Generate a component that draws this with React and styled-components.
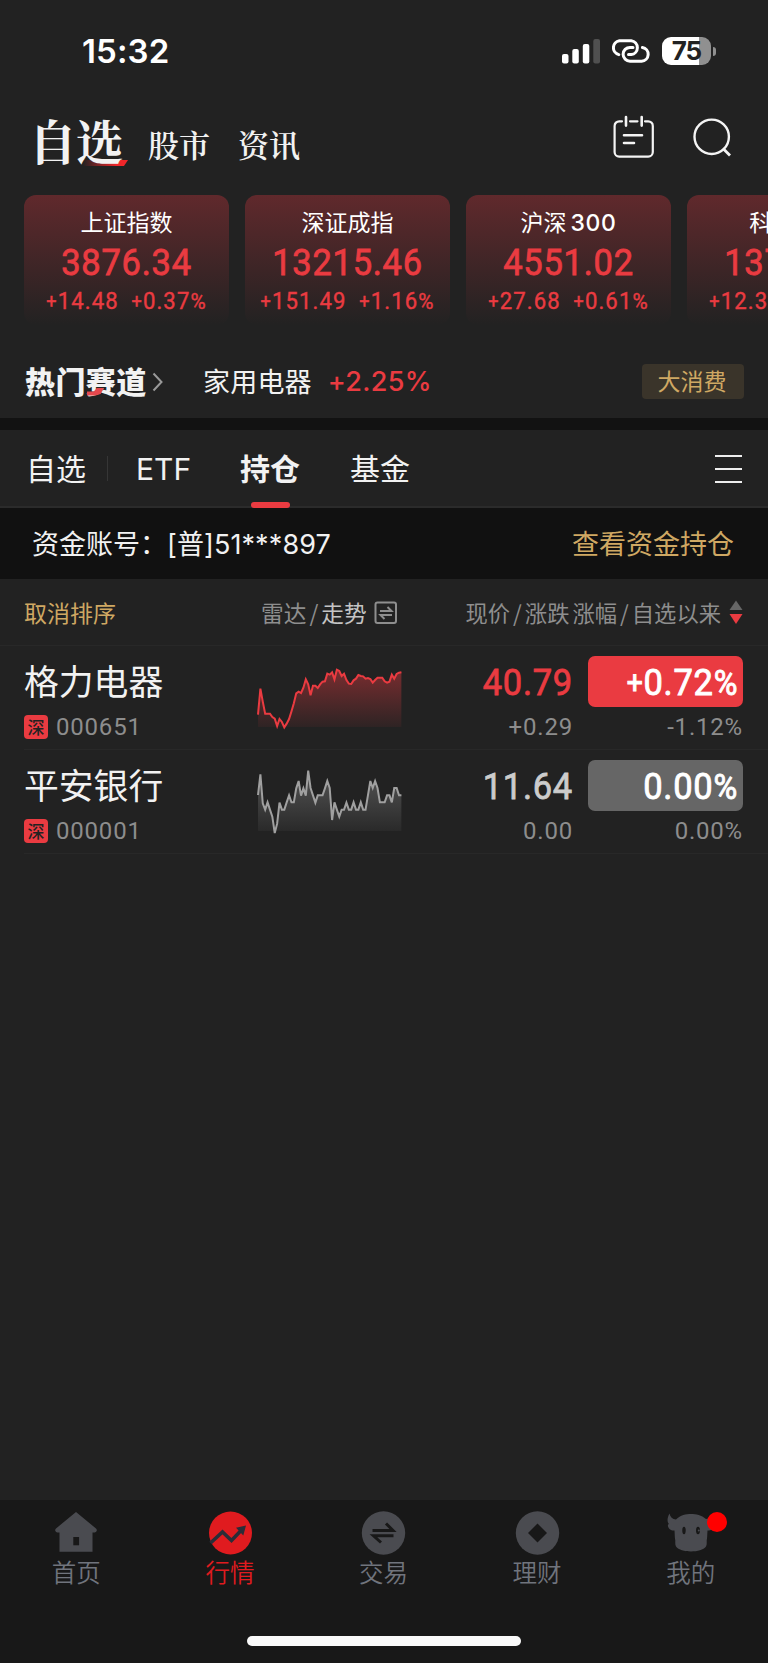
import styled, { createGlobalStyle } from 'styled-components';

const cjk = '"Noto Sans CJK SC", sans-serif';
const digits = 'Roboto, "Noto Sans CJK SC", sans-serif';
const latin = 'Inter, "Noto Sans CJK SC", sans-serif';
const serif = '"Noto Serif CJK SC", "Noto Serif SC", "Source Han Serif SC", "Noto Sans CJK SC", serif';

const RED = '#ea3b41';
const GOLD = '#cfa863';

const GlobalStyle = createGlobalStyle`
  * {
    box-sizing: border-box;
  }
  body {
    margin: 0;
    background: #222;
  }
`;

const Screen = styled.div`
  display: flex;
  flex-direction: column;
  width: 768px;
  height: 1663px;
  overflow: hidden;
  background: #222;
  color: #f2f2f2;
  font-family: ${cjk};
  white-space: nowrap;
`;

const StatusBar = styled.div`
  display: flex;
  align-items: center;
  height: 102px;
  padding: 0 52px 0 82px;
`;

const Clock = styled.div`
  flex: 1;
  color: #fff;
  font: 600 33px/40px ${latin};
  letter-spacing: 0.1px;
`;

const StatusIcons = styled.div`
  display: flex;
  align-items: center;
  gap: 12px;
`;

const Battery = styled.div`
  display: flex;
  align-items: center;
  gap: 2px;
`;

const BatteryBody = styled.div`
  width: 49px;
  height: 28px;
  border-radius: 9px;
  background: linear-gradient(90deg, #fff 37px, #909090 37px);
  color: #222;
  text-align: center;
  font: 700 26px/28px ${latin};
  letter-spacing: -0.9px;
`;

const BatteryNub = styled.div`
  width: 3px;
  height: 9px;
  border-radius: 0 4px 4px 0;
  background: #909090;
`;

const Header = styled.header`
  display: flex;
  height: 93px;
  padding: 0 36px 0 29px;
`;

const MainTitle = styled.div`
  position: relative;
  width: 119px;
  padding-top: 10px;
  font: 700 47.5px/56px ${serif};
  letter-spacing: -0.8px;
  span {
    position: relative;
  }
`;

const TitleMark = styled.i`
  position: absolute;
  left: 54px;
  top: 58px;
  width: 45px;
  height: 6px;
  background: linear-gradient(90deg, transparent, #f0262a 75%);
  clip-path: polygon(0 0, 100% 0, 91% 100%, 0 100%);
`;

const SubTitle = styled.div`
  width: 90px;
  padding-top: 19px;
  font: 600 31px/46px ${serif};
`;

const HeaderIcons = styled.div`
  display: flex;
  gap: 38px;
  margin-left: auto;
  padding-top: 13px;
`;

const Cards = styled.div`
  display: flex;
  gap: 16px;
  height: 130px;
  padding-left: 24px;
`;

const Card = styled.div`
  flex: none;
  width: 205px;
  padding-top: 10px;
  border-radius: 12px;
  background: linear-gradient(#60292c, #222);
  text-align: center;
`;

const CardName = styled.div`
  color: #fff;
  font: 400 23px/32px ${cjk};
  b {
    margin-left: 4px;
    font: 450 23px ${latin};
    letter-spacing: 0.6px;
  }
`;

const CardValue = styled.div`
  margin-top: 1px;
  color: ${RED};
  font: 400 37.5px/48px ${digits};
  letter-spacing: 0.8px;
  transform: scaleX(0.92);
  -webkit-text-stroke: 0.8px ${RED};
`;

const CardChange = styled.div`
  display: flex;
  justify-content: center;
  gap: 14px;
  margin-top: 1px;
  color: ${RED};
  font: 400 24px/28px ${digits};
  letter-spacing: 1.2px;
  transform: scaleX(0.92);
  -webkit-text-stroke: 0.4px ${RED};
`;

const Plus = styled.span`
  font-size: 0.82em;
  vertical-align: 0.06em;
`;

const PercentSign = styled.span`
  font-size: 0.94em;
`;

const HotRow = styled.div`
  display: flex;
  align-items: center;
  height: 93px;
  padding: 20px 24px 0 25px;
`;

const HotTitle = styled.div`
  position: relative;
  width: 122px;
  margin-top: -4px;
  font: 900 30px/40px ${cjk};
  letter-spacing: 0.4px;
`;

const HotMark = styled.i`
  position: absolute;
  left: 62px;
  top: 28px;
  width: 17px;
  height: 8px;
  background: #e5484d;
  clip-path: polygon(60% 0, 100% 0, 80% 80%, 50% 100%, 0 100%, 0 50%, 40% 50%);
`;

const HotName = styled.div`
  margin: -2px 0 0 36px;
  font-size: 27px;
  line-height: 40px;
  letter-spacing: 0.2px;
`;

const HotChange = styled.div`
  flex: 1;
  margin-left: 16px;
  color: ${RED};
  font: 450 27px/40px ${latin};
  letter-spacing: 0.3px;
`;

const Tag = styled.div`
  width: 102px;
  height: 35px;
  padding-right: 2px;
  border-radius: 4px;
  background: #3a342a;
  color: ${GOLD};
  text-align: center;
  font-size: 23px;
  line-height: 33px;
`;

const Tabs = styled.nav`
  display: flex;
  align-items: center;
  height: 90px;
  padding: 0 26px;
  border-top: 12px solid #121212;
  border-bottom: 2px solid #2b2b2b;
`;

const Tab = styled.div`
  position: relative;
  height: 76px;
  margin-right: ${(p) => p.$gap}px;
  font-family: ${(p) => (p.$latin ? latin : cjk)};
  font-size: 30px;
  line-height: ${(p) => (p.$latin ? 78 : 75)}px;
  font-weight: ${(p) => (p.$active ? 600 : 400)};
  &::after {
    content: '';
    display: ${(p) => (p.$active ? 'block' : 'none')};
    position: absolute;
    left: 11px;
    bottom: -2px;
    width: 39px;
    height: 6px;
    border-radius: 3px;
    background: ${RED};
  }
`;

const TabDivider = styled.div`
  width: 1px;
  height: 25px;
  margin-right: 28px;
  background: #363636;
`;

const MenuLines = styled.div`
  height: 28px;
  width: 27px;
  margin: 2px 0 0 auto;
  border-top: 2px solid #eee;
  border-bottom: 2px solid #eee;
  background: linear-gradient(#eee, #eee) 0 11px / 27px 2px no-repeat;
`;

const Account = styled.div`
  display: flex;
  align-items: center;
  justify-content: space-between;
  height: 71px;
  padding: 0 34px 2px 32px;
  background: #111;
  font-size: 27px;
  b {
    font: 400 27px ${latin};
    letter-spacing: 0.1px;
  }
`;

const GoldText = styled.span`
  color: ${GOLD};
`;

const ListHead = styled.div`
  display: flex;
  align-items: center;
  height: 67px;
  padding: 0 25px 0 24px;
  border-bottom: 1px solid #282828;
  color: #8e8e8e;
  font-size: 23px;
`;

const HeadTrend = styled.div`
  display: flex;
  align-items: center;
  gap: 7px;
  flex: 1;
  margin-left: 145px;
  font-size: 22.7px;
  b {
    color: #c4c4c4;
    font-weight: 400;
  }
  i {
    margin: 0 3px;
    font-style: normal;
  }
  svg {
    margin-top: 1px;
  }
`;

const HeadPrice = styled.div`
  display: flex;
  align-items: center;
  font-size: 22.3px;
  i {
    margin: 0 3px;
    font-style: normal;
  }
  svg {
    margin: 1px 0 0 8px;
  }
`;

const HeadGap = styled.span`
  width: 3px;
`;

const StockRow = styled.div`
  display: grid;
  grid-template-columns: 233px 145px 1fr 155px;
  height: 104px;
  margin-left: 24px;
  padding-right: 25px;
  border-bottom: 1px solid #282828;
`;

const StockName = styled.div`
  height: 62px;
  padding-top: 8px;
  font-size: 34.8px;
  line-height: 52px;
`;

const StockCode = styled.div`
  display: flex;
  align-items: center;
  gap: 8px;
  height: 37px;
  color: #8d8d8d;
  font: 400 24px/38px ${digits};
  letter-spacing: 0.8px;
`;

const Market = styled.span`
  width: 24px;
  height: 24px;
  border-radius: 4px;
  background: ${RED};
  color: #222;
  text-align: center;
  font: 500 17px/23px ${cjk};
  letter-spacing: 0;
`;

const Figures = styled.div`
  padding-top: 10px;
  text-align: right;
`;

const Price = styled.div`
  height: 51px;
  margin-right: 15px;
  color: ${(p) => (p.$flat ? '#ccc' : RED)};
  font: 400 37.5px/52px ${digits};
  letter-spacing: 0.8px;
  transform: scaleX(0.92);
  transform-origin: right;
  -webkit-text-stroke: 0.8px ${(p) => (p.$flat ? '#ccc' : RED)};
`;

const Percent = styled.div`
  height: 51px;
  padding-right: 5px;
  border-radius: 7px;
  background: ${(p) => (p.$flat ? '#666' : RED)};
  color: #fff;
  font: 400 37.5px/52px ${digits};
  letter-spacing: 0.8px;
  -webkit-text-stroke: 0.9px #fff;
  > span {
    display: inline-block;
    transform: scaleX(0.92);
    transform-origin: right;
  }
`;

const Minor = styled.div`
  padding-right: ${(p) => p.$inset || 0}px;
  color: #8d8d8d;
  font: 400 24px/40px ${digits};
  letter-spacing: 0.8px;
`;

const Spacer = styled.div`
  flex: 1;
`;

const BottomNav = styled.nav`
  display: grid;
  grid-template-columns: repeat(5, 1fr);
  align-content: start;
  height: 163px;
  padding-top: 11px;
  background: #181818;
  position: relative;
`;

const NavItem = styled.div`
  display: flex;
  flex-direction: column;
  align-items: center;
  padding-right: 1px;
  color: ${(p) => (p.$active ? '#e01b1f' : '#70747d')};
  font-size: 24.5px;
  line-height: 34px;
  font-weight: 350;
  svg {
    overflow: visible;
  }
`;

const HomeBar = styled.div`
  position: absolute;
  left: 247px;
  bottom: 17px;
  width: 274px;
  height: 10px;
  border-radius: 5px;
  background: #fafafa;
`;

const indexes = [
  { name: '上证指数', value: '3876.34', diff: '+14.48', pct: '+0.37%' },
  { name: '深证成指', value: '13215.46', diff: '+151.49', pct: '+1.16%' },
  { name: '沪深', num: '300', value: '4551.02', diff: '+27.68', pct: '+0.61%' },
  { name: '科创', num: '50', value: '1370.00', diff: '+12.38', pct: '+0.91%' },
];

// y values only, the x step is constant
const geli = [
  206, 128, 167, 203, 203, 203, 213, 218, 240, 219, 228, 244, 233, 219, 196,
  172, 142, 137, 141, 125, 100, 115, 148, 119, 119, 126, 115, 107, 106, 83, 86,
  79, 100, 71, 75, 90, 83, 102, 113, 114, 103, 98, 87, 90, 91, 98, 96, 99, 110,
  102, 95, 95, 95, 106, 110, 107, 86, 98, 84, 80, 79,
];

const pingan = [
  135, 73, 160, 179, 157, 179, 200, 249, 221, 158, 179, 179, 157, 136, 157,
  157, 115, 93, 137, 115, 137, 62, 114, 136, 158, 136, 136, 136, 115, 93, 114,
  210, 157, 179, 200, 179, 179, 158, 179, 179, 157, 179, 179, 157, 179, 179,
  136, 93, 114, 93, 114, 157, 157, 157, 136, 136, 157, 114, 114, 136, 136,
];

const stocks = [
  {
    name: '格力电器',
    code: '000651',
    price: '40.79',
    pct: '+0.72%',
    diff: '+0.29',
    since: '-1.12%',
    line: geli,
  },
  {
    name: '平安银行',
    code: '000001',
    price: '11.64',
    pct: '0.00%',
    diff: '0.00',
    since: '0.00%',
    line: pingan,
    flat: true,
  },
];

// sign and percent are set smaller than the digits
function Change({ value }) {
  return (
    <span>
      {value.startsWith('+') && <Plus>+</Plus>}
      {value.replace(/[+%]/g, '')}
      {value.endsWith('%') && <PercentSign>%</PercentSign>}
    </span>
  );
}

function Spark({ id, line, flat }) {
  const color = flat ? '#a0a0a0' : RED;
  const points = line.map((y, i) => `${(3 + i * 7.17).toFixed(1)},${y}`).join(' ');
  return (
    <svg width="145" height="103" viewBox="0 0 435 309">
      <defs>
        <linearGradient id={id} gradientUnits="userSpaceOnUse" x1="0" y1="65" x2="0" y2="243">
          <stop offset="0" stopColor={color} stopOpacity={flat ? 0.4 : 0.45} />
          <stop offset="1" stopColor={color} stopOpacity="0.06" />
        </linearGradient>
      </defs>
      <polygon points={`3,243 ${points} 433,243`} fill={`url(#${id})`} />
      <polyline points={points} fill="none" stroke={color} strokeWidth="6" />
    </svg>
  );
}

function SignalIcon() {
  return (
    <svg width="38" height="25" viewBox="0 0 38 25" fill="#fff">
      <rect x="0" y="15" width="6.5" height="9.5" rx="2" />
      <rect x="10.3" y="10" width="6.5" height="14.5" rx="2" />
      <rect x="20.8" y="5" width="6.5" height="19.5" rx="2" />
      <rect x="31.3" y="0" width="6.7" height="24.5" rx="2" fill="#505050" />
    </svg>
  );
}

function LinkIcon() {
  return (
    <svg width="38" height="24" viewBox="0 0 38 24" fill="none" stroke="#fff" strokeWidth="3" strokeLinecap="round">
      <path d="M6.8 15.6A7.1 7.1 0 0 1 7.4 1.7H19.2A7 7 0 0 1 19.2 15.6H16.5" />
      <path d="M21 8.4H18A6.9 6.9 0 0 0 18 22.2H29.6A6.9 6.9 0 0 0 30.4 8.5" />
    </svg>
  );
}

function CalendarIcon() {
  return (
    <svg width="42" height="44" viewBox="0 0 42 44" fill="none" stroke="#f4f4f4" strokeWidth="2.2" strokeLinecap="round">
      <path d="M9 6.3H6.2a4.6 4.6 0 0 0-4.6 4.6V37a4.6 4.6 0 0 0 4.6 4.6h29A4.6 4.6 0 0 0 39.8 37V10.9a4.6 4.6 0 0 0-4.6-4.6H32M17 6.3h7.5" />
      <path d="M13 2v8.6M28.7 2v8.6M11 20.2h18M11 28h10" strokeWidth="2.6" />
    </svg>
  );
}

function SearchIcon() {
  return (
    <svg width="39" height="42" viewBox="0 0 39 42" fill="none" stroke="#f4f4f4" strokeWidth="2.4">
      <circle cx="18.7" cy="21.8" r="17.2" />
      <path d="M30 33.5l7 7" strokeWidth="2.8" />
    </svg>
  );
}

function SwapBoxIcon() {
  return (
    <svg width="24" height="24" viewBox="0 0 24 24" fill="none" stroke="#8e8e8e" strokeWidth="2">
      <rect x="1.5" y="1.5" width="20.5" height="20.5" rx="2" />
      <path d="M6 10h11.5l-4-4M18 14H6.500l4 4" />
    </svg>
  );
}

function NavIcon({ type }) {
  return (
    <svg width="60" height="44" viewBox="0 0 60 44" fill="#4a4b50">
      {type === 'home' && (
        <>
          <path d="M30 1 50 17.500q1.200 1.200.6 2.600-.4 1.300-2 1.300H46.500V40.700H13.500V21.400H11.400q-1.600 0-2-1.300-.6-1.400.6-2.600z" />
          <path d="M27.300 26h5.800v8.300h-5.800z" fill="#181818" />
        </>
      )}
      {type === 'market' && (
        <>
          <circle cx="30.500" cy="22" r="21.500" fill="#e01b1f" />
          <path d="M10.500 32 22.500 21l9 8.500L41.500 19" fill="none" stroke="#2b2d38" strokeWidth="3.6" />
          <path d="M36 16.800 46 14.500 43.300 24.500z" fill="#2b2d38" />
        </>
      )}
      {type === 'trade' && (
        <>
          <circle cx="30.500" cy="22" r="21.700" />
          <path d="M19.500 19.500H40L33 12.500M40.500 24.800H20.500L28 31.500" fill="none" stroke="#181818" strokeWidth="3" />
        </>
      )}
      {type === 'wealth' && (
        <>
          <circle cx="30.500" cy="22" r="21.700" />
          <path d="M30.500 12.500 40 22 30.500 31.500 21 22z" fill="#181818" />
        </>
      )}
      {type === 'mine' && (
        <>
          <path d="M8.500 2.500C6 7 6 11 8 13c-2 .5-1 3.500.5 5 2 1.600 4 1.600 5 1.600.3 4 .2 7 .8 10 0 2-.3 4 .7 6 2.500 3.500 8.500 4.900 15 4.900s12.500-1.400 15-4.900c1-2 .7-4 .7-6 .6-3 .5-6 .8-10 2 0 3.500-.6 5-1.600 2-2 2.500-4 .5-5 2-3 2-6 0-10-1 3-3.500 4.700-7 5C40.500 4 35 3 30 3S19.500 4 15 8.500C11.500 8.200 9 6 8.500 2.500z" />
          <ellipse cx="23" cy="19.500" rx="1.700" ry="3.700" fill="#181818" />
          <ellipse cx="37" cy="19.500" rx="2" ry="3.700" fill="#181818" />
          <circle cx="37.800" cy="19.500" r="1" />
          <circle cx="56" cy="11" r="10" fill="#f00" />
        </>
      )}
    </svg>
  );
}

const navItems = [
  { type: 'home', label: '首页' },
  { type: 'market', label: '行情', active: true },
  { type: 'trade', label: '交易' },
  { type: 'wealth', label: '理财' },
  { type: 'mine', label: '我的' },
];

export default function App() {
  return (
    <>
      <GlobalStyle />
      <Screen>
        <StatusBar>
          <Clock>15:32</Clock>
          <StatusIcons>
            <SignalIcon />
            <LinkIcon />
            <Battery>
              <BatteryBody>75</BatteryBody>
              <BatteryNub />
            </Battery>
          </StatusIcons>
        </StatusBar>

        <Header>
          <MainTitle>
            <TitleMark />
            <span>自选</span>
          </MainTitle>
          <SubTitle>股市</SubTitle>
          <SubTitle>资讯</SubTitle>
          <HeaderIcons>
            <CalendarIcon />
            <SearchIcon />
          </HeaderIcons>
        </Header>

        <Cards>
          {indexes.map((item) => (
            <Card key={item.name}>
              <CardName>
                {item.name}
                {item.num && <b>{item.num}</b>}
              </CardName>
              <CardValue>{item.value}</CardValue>
              <CardChange>
                <Change value={item.diff} />
                <Change value={item.pct} />
              </CardChange>
            </Card>
          ))}
        </Cards>

        <HotRow>
          <HotTitle>
            热门赛道
            <HotMark />
          </HotTitle>
          <svg width="20" height="20" viewBox="0 0 20 20" fill="none" stroke="#999" strokeWidth="2">
            <path d="M6.500 1.500 14.500 10 6.500 18.500" />
          </svg>
          <HotName>家用电器</HotName>
          <HotChange>+2.25%</HotChange>
          <Tag>大消费</Tag>
        </HotRow>

        <Tabs>
          <Tab $gap={21}>自选</Tab>
          <TabDivider />
          <Tab $gap={49} $latin>
            ETF
          </Tab>
          <Tab $gap={50} $active>
            持仓
          </Tab>
          <Tab $gap={0}>基金</Tab>
          <MenuLines />
        </Tabs>

        <Account>
          <span>
            资金账号：<b>[</b>普<b>]51***897</b>
          </span>
          <GoldText>查看资金持仓</GoldText>
        </Account>

        <ListHead>
          <GoldText>取消排序</GoldText>
          <HeadTrend>
            <span>
              雷达<i>/</i>
              <b>走势</b>
            </span>
            <SwapBoxIcon />
          </HeadTrend>
          <HeadPrice>
            现价<i>/</i>涨跌
            <HeadGap />
            涨幅<i>/</i>自选以来
            <svg width="14" height="25" viewBox="0 0 14 25">
              <path d="M7 .5 13.500 10H.5z" fill="#666" />
              <path d="M7 24 .5 14h13z" fill={RED} />
            </svg>
          </HeadPrice>
        </ListHead>

        {stocks.map((s) => (
          <StockRow key={s.code}>
            <div>
              <StockName>{s.name}</StockName>
              <StockCode>
                <Market>深</Market>
                {s.code}
              </StockCode>
            </div>
            <Spark id={`fill-${s.code}`} line={s.line} flat={s.flat} />
            <Figures>
              <Price $flat={s.flat}>{s.price}</Price>
              <Minor $inset={15}>{s.diff}</Minor>
            </Figures>
            <Figures>
              <Percent $flat={s.flat}>
                <Change value={s.pct} />
              </Percent>
              <Minor>{s.since}</Minor>
            </Figures>
          </StockRow>
        ))}

        <Spacer />

        <BottomNav>
          {navItems.map((item) => (
            <NavItem key={item.type} $active={item.active}>
              <NavIcon type={item.type} />
              {item.label}
            </NavItem>
          ))}
          <HomeBar />
        </BottomNav>
      </Screen>
    </>
  );
}
